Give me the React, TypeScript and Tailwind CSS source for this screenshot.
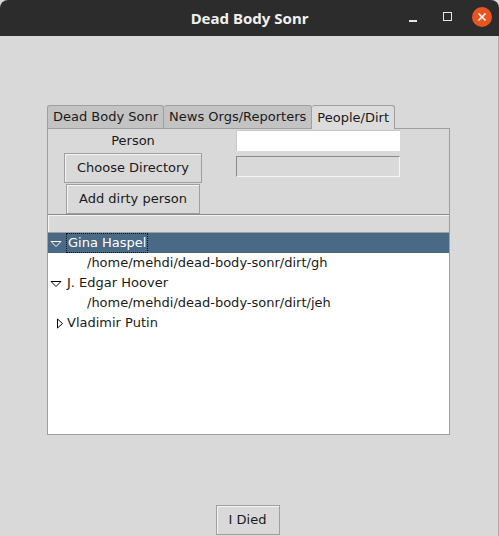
import React from "react";

const tk = { fontFamily: '"DejaVu Sans", "Liberation Sans", sans-serif' };

function DownTri({ color }: { color: string }) {
  return (
    <svg width="12" height="7" viewBox="0 0 12 7" className="shrink-0">
      <path d="M1 1.5 L11 1.5 L6 6.5 Z" fill="none" stroke={color} strokeWidth="1" />
    </svg>
  );
}

function RightTri() {
  return (
    <svg width="7" height="11" viewBox="0 0 7 11" className="shrink-0">
      <path d="M1.5 1 L6.5 5.5 L1.5 10 Z" fill="none" stroke="#000" strokeWidth="1" />
    </svg>
  );
}

function TkButton({ label, className = "" }: { label: string; className?: string }) {
  return (
    <div
      className={
        "flex items-center justify-center bg-[#d9d9d9] border border-[#9f9f9f] shadow-[inset_1px_1px_0_#f4f4f4] text-[13px] text-[#1a1a1a] " +
        className
      }
    >
      {label}
    </div>
  );
}

export default function App() {
  return (
    <div className="w-[499px] h-[536px] bg-[#d9d9d9] flex flex-col overflow-hidden" style={tk}>
      {/* window title bar */}
      <div className="h-[36px] shrink-0 bg-[#2c2c2c] rounded-t-[8px] relative flex items-center justify-center">
        <span
          className="text-[15px] font-bold text-[#f0f0f0]"
          style={{ fontFamily: '"Noto Sans", "Open Sans", sans-serif' }}
        >
          Dead Body Sonr
        </span>
        <div className="absolute right-[7px] top-0 h-full flex items-center">
          <div className="w-[8px] h-[2px] bg-[#e6e6e6] mt-[6px] mr-[26px]" />
          <div className="w-[9px] h-[9px] border border-[#e6e6e6] mr-[20px] mb-[3px]" />
          <div className="w-[20px] h-[20px] rounded-full bg-[#e95420] flex items-center justify-center mb-[3px]">
            <svg width="10" height="10" viewBox="0 0 10 10">
              <path d="M1.5 1.5 L8.5 8.5 M8.5 1.5 L1.5 8.5" stroke="#fff" strokeWidth="1.6" />
            </svg>
          </div>
        </div>
      </div>

      {/* window body */}
      <div className="flex-1 flex flex-col border-r border-[#a8a8a8]">
        <div className="pt-[68px] pl-[47px]">
          {/* notebook tabs */}
          <div className="flex items-end h-[24px]">
            <div className="h-[23px] px-[5px] flex items-center bg-[#c3c3c3] border border-b-0 border-[#9f9f9f] rounded-t-[3px] text-[13px] text-[#1a1a1a]">
              Dead Body Sonr
            </div>
            <div className="h-[23px] px-[5px] flex items-center bg-[#c3c3c3] border border-b-0 border-l-0 border-[#9f9f9f] rounded-t-[3px] text-[13px] text-[#1a1a1a]">
              News Orgs/Reporters
            </div>
            <div className="h-[24px] px-[5px] flex items-center bg-[#dcdcdc] border border-l-0 border-b-0 border-[#9f9f9f] rounded-t-[3px] text-[13px] text-[#1a1a1a] relative top-[1px] z-10">
              People/Dirt
            </div>
          </div>

          {/* notebook pane */}
          <div className="w-[403px] h-[307px] border border-[#9f9f9f] flex flex-col">
            <div className="flex h-[23px]">
              <div className="w-[170px] flex items-center justify-center text-[13px] text-[#1a1a1a]">Person</div>
              <div className="pl-[18px] pt-[1px]">
                <div className="w-[164px] h-[21px] bg-white border-t border-l border-[#c8c8c8]" />
              </div>
            </div>
            <div className="flex h-[31px]">
              <div className="w-[170px] flex justify-center pt-px">
                <TkButton label="Choose Directory" className="w-[138px] h-[30px]" />
              </div>
              <div className="pl-[18px] pt-[4px]">
                <div className="w-[164px] h-[21px] bg-[#d9d9d9] border border-t-[#8a8a8a] border-l-[#8a8a8a] border-b-[#f4f4f4] border-r-[#f4f4f4]" />
              </div>
            </div>
            <div className="flex h-[31px]">
              <div className="w-[170px] flex justify-center pt-px">
                <TkButton label="Add dirty person" className="w-[134px] h-[30px]" />
              </div>
            </div>

            {/* tree view */}
            <div className="flex-1 bg-white border-t border-[#8a8a8a] flex flex-col text-[13px]">
              <div className="h-[18px] bg-[#d9d9d9] border-b border-[#9f9f9f] shadow-[inset_1px_1px_0_#f4f4f4]" />
              <div className="h-[20px] bg-[#4a6984] flex items-center pl-[2px] text-white">
                <DownTri color="#ffffff" />
                <span className="ml-[4px] px-px border border-dotted border-[#111] leading-[18px]">Gina Haspel</span>
              </div>
              <div className="h-[20px] flex items-center pl-[39px] text-[#1a1a1a]">
                /home/mehdi/dead-body-sonr/dirt/gh
              </div>
              <div className="h-[20px] flex items-center pl-[2px] text-[#1a1a1a]">
                <DownTri color="#000000" />
                <span className="ml-[5px]">J. Edgar Hoover</span>
              </div>
              <div className="h-[20px] flex items-center pl-[39px] text-[#1a1a1a]">
                /home/mehdi/dead-body-sonr/dirt/jeh
              </div>
              <div className="h-[20px] flex items-center pl-[8px] text-[#1a1a1a]">
                <RightTri />
                <span className="ml-[4px]">Vladimir Putin</span>
              </div>
            </div>
          </div>
        </div>

        <div className="flex-1" />
        <div className="flex justify-center pb-px">
          <TkButton label="I Died" className="w-[64px] h-[30px] ml-[-3px]" />
        </div>
      </div>
    </div>
  );
}
